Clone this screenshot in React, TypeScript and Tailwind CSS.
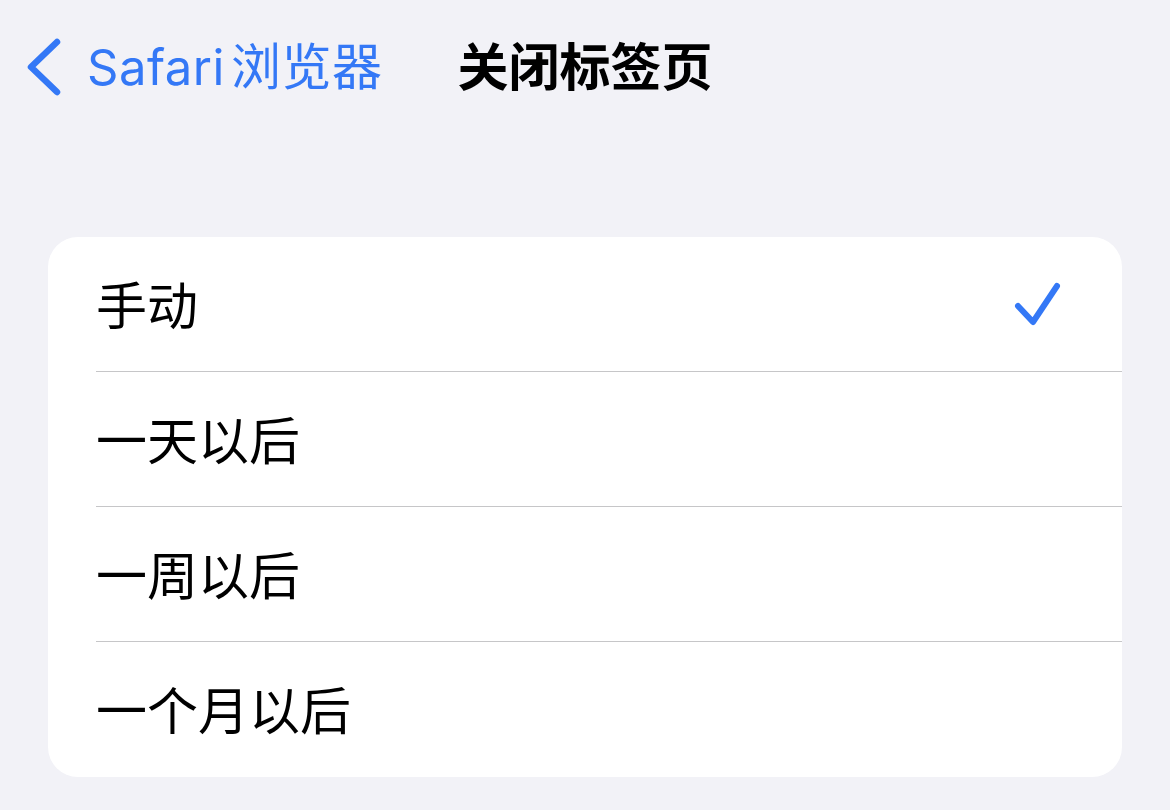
const OPTIONS = ["手动", "一天以后", "一周以后", "一个月以后"] as const;

const FONT = "font-['Inter','Noto_Sans_CJK_SC',sans-serif]";

function BackChevron() {
  return (
    <svg width="36" height="58" viewBox="0 0 36 58" fill="none" aria-hidden="true">
      <polyline
        points="31,4 5,29 31,54"
        stroke="#3478f6"
        strokeWidth="6.5"
        strokeLinecap="round"
        strokeLinejoin="round"
      />
    </svg>
  );
}

function Check() {
  return (
    <svg width="48" height="48" viewBox="0 0 48 48" fill="none" aria-hidden="true">
      <polyline
        points="4,26 19,42 43,6"
        stroke="#3478f6"
        strokeWidth="6"
        strokeLinecap="round"
        strokeLinejoin="round"
      />
    </svg>
  );
}

export default function App() {
  const selected = 0;
  return (
    <div className={`min-h-[810px] w-full bg-[#f2f2f7] ${FONT} text-black`}>
      {/* nav bar */}
      <div className="grid h-[134px] grid-cols-[1fr_auto_1fr] items-center">
        <div className="flex items-center gap-[25px] pl-[26px] text-[#3478f6]">
          <BackChevron />
          <span className="text-[49px] leading-none tracking-[0.5px]">
            Safari<span className="pl-[6px] text-[50px]">浏览器</span>
          </span>
        </div>
        <h1 className="text-[51px] font-bold leading-none">关闭标签页</h1>
        <div />
      </div>

      {/* options */}
      <div className="mx-12 mt-[103px] overflow-hidden rounded-[30px] bg-white">
        {OPTIONS.map((label, i) => (
          <div key={label} className="pl-12">
            <div
              className={`flex h-[135px] items-center justify-between pr-[60px] ${
                i < OPTIONS.length - 1 ? "border-b border-[#c6c6c8]" : ""
              }`}
            >
              <span className="pt-[4px] text-[51px] leading-none">{label}</span>
              {i === selected && <Check />}
            </div>
          </div>
        ))}
      </div>
    </div>
  );
}
